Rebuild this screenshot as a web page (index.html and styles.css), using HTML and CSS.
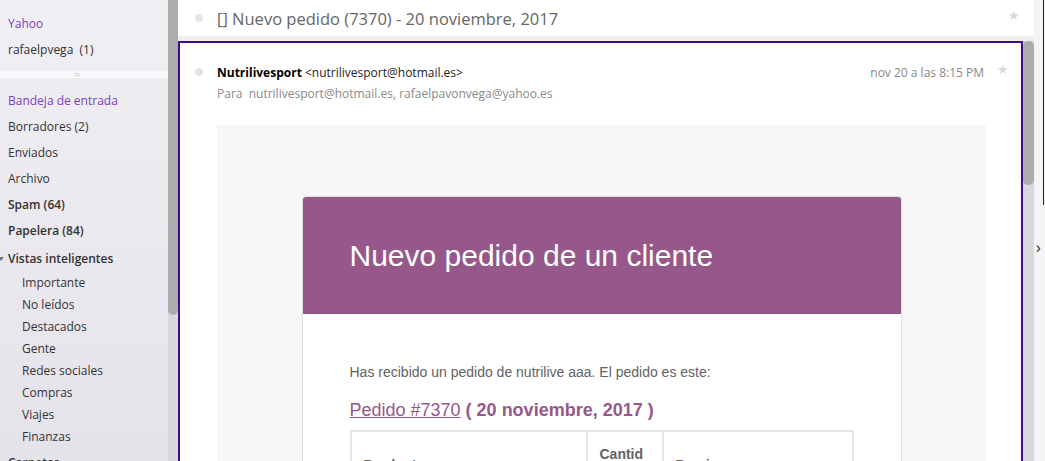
FILE: index.html
```html
<!DOCTYPE html>
<html>
<head>
    <meta name="viewport" content="width=device-width, initial-scale=1.0">
    <title>[] Nuevo pedido (7370) - 20 noviembre, 2017</title>
    <link rel="stylesheet" href="styles.css">
</head>
<body>
    <div class="app">
        <!-- Folder list -->
        <aside class="sidebar">
            <ul class="accounts">
                <li class="item active">Yahoo</li>
                <li class="item">rafaelpvega&nbsp; (1)</li>
            </ul>
            <div class="divider">=</div>
            <ul class="folders">
                <li class="item active">Bandeja de entrada</li>
                <li class="item">Borradores (2)</li>
                <li class="item">Enviados</li>
                <li class="item">Archivo</li>
                <li class="item strong">Spam (64)</li>
                <li class="item strong">Papelera (84)</li>
                <li class="group"><span class="caret"></span>Vistas inteligentes</li>
                <li class="sub">Importante</li>
                <li class="sub">No leídos</li>
                <li class="sub">Destacados</li>
                <li class="sub">Gente</li>
                <li class="sub">Redes sociales</li>
                <li class="sub">Compras</li>
                <li class="sub">Viajes</li>
                <li class="sub">Finanzas</li>
                <li class="group"><span class="caret"></span>Carpetas</li>
            </ul>
        </aside>
        <div class="scrollbar side-scroll"><div class="thumb"></div></div>

        <!-- Reading pane -->
        <main class="reader">
            <header class="subject-bar">
                <span class="dot"></span>
                <h1 class="subject">[] Nuevo pedido (7370) - 20 noviembre, 2017</h1>
                <span class="star">&#9733;</span>
            </header>

            <div class="reader-body">
                <article class="message">
                    <div class="msg-head">
                        <span class="dot"></span>
                        <div class="msg-meta">
                            <div class="from"><b>Nutrilivesport</b> &lt;nutrilivesport@hotmail.es&gt;</div>
                            <div class="to">Para&nbsp; nutrilivesport@hotmail.es, rafaelpavonvega@yahoo.es</div>
                        </div>
                        <span class="date">nov 20 a las 8:15 PM</span>
                        <span class="star">&#9733;</span>
                    </div>

                    <!-- Email content -->
                    <div class="mail-wrap">
                        <div class="mail-card">
                            <div class="mail-header">
                                <h2>Nuevo pedido de un cliente</h2>
                            </div>
                            <div class="mail-content">
                                <p>Has recibido un pedido de nutrilive aaa. El pedido es este:</p>
                                <h3><a href="#">Pedido #7370</a> ( 20 noviembre, 2017 )</h3>
                                <table class="order">
                                    <tr>
                                        <th class="col-product">Producto</th>
                                        <th class="col-qty">Cantidad</th>
                                        <th class="col-price">Precio</th>
                                    </tr>
                                </table>
                            </div>
                        </div>
                    </div>
                </article>
                <div class="scrollbar msg-scroll"><div class="thumb"></div></div>
            </div>
        </main>

        <div class="edge">
            <div class="edge-line"></div>
            <span class="chevron">&#8250;</span>
        </div>
    </div>
</body>
</html>
```

FILE: styles.css
```css
html, body {
    margin: 0;
    height: 100%;
    overflow: hidden;
}

body {
    font-family: "Open Sans", "Noto Sans", sans-serif;
    font-size: 12px;
    color: #333;
    background: #efeef2;
}

ul {
    list-style: none;
    margin: 0;
    padding: 0;
}

.app {
    display: flex;
    height: 461px;
}

/* Sidebar */
.sidebar {
    width: 168px;
    flex-shrink: 0;
    background: linear-gradient(#f0eff3, #e5e3ea);
    padding-top: 11px;
    box-sizing: border-box;
    overflow: hidden;
}

.item {
    line-height: 26px;
    padding-left: 8px;
    white-space: nowrap;
}

.item.active {
    color: #7d3ebf;
}

.item.strong,
.group {
    font-weight: 600;
}

.divider {
    margin: 8px 0 10px;
    height: 7px;
    line-height: 7px;
    background: #f8f7fa;
    color: #b9b9bd;
    font-size: 10px;
    text-align: center;
    padding-right: 14px;
}

.group {
    line-height: 26px;
    margin-top: 2px;
    padding-left: 8px;
    position: relative;
}

.caret {
    position: absolute;
    left: -2px;
    top: 11px;
    border-left: 3px solid transparent;
    border-right: 3px solid transparent;
    border-top: 4px solid #777;
}

.sub {
    line-height: 22px;
    padding-left: 22px;
}

/* Scrollbars */
.scrollbar {
    width: 10px;
    flex-shrink: 0;
    background: #d8d7dc;
}

.scrollbar .thumb {
    background: #adadad;
    border-radius: 0 0 5px 5px;
}

.side-scroll .thumb {
    height: 315px;
}

.msg-scroll {
    width: 11px;
}

.msg-scroll .thumb {
    height: 144px;
    border-radius: 5px;
}

/* Reading pane */
.reader {
    flex: 1;
    display: flex;
    flex-direction: column;
    min-width: 0;
}

.subject-bar {
    height: 36px;
    background: #fff;
    display: flex;
    align-items: center;
    padding: 0 14px 0 17px;
    margin-bottom: 5px;
    flex-shrink: 0;
}

.dot {
    width: 8px;
    height: 8px;
    border-radius: 50%;
    background: #e4e4e4;
    flex-shrink: 0;
}

.subject {
    flex: 1;
    margin: 0 0 0 14px;
    font-size: 16.5px;
    font-weight: 400;
    color: #666;
}

.star {
    color: #d9d9d9;
    font-size: 13px;
}

.subject-bar .star {
    margin-top: -6px;
}

.reader-body {
    flex: 1;
    display: flex;
    min-height: 0;
}

.message {
    flex: 1;
    border: 2px solid #3f0b8f;
    border-bottom: none;
    background: #fff;
    overflow: hidden;
}

.msg-head {
    display: flex;
    align-items: flex-start;
    padding: 19px 12px 0 15px;
}

.msg-head .dot {
    margin-top: 6px;
}

.msg-meta {
    flex: 1;
    margin-left: 14px;
    line-height: 21px;
}

.from {
    color: #222;
}

.from b {
    color: #000;
    font-weight: 700;
}

.to {
    color: #8a8a8a;
}

.date {
    color: #888;
    line-height: 21px;
}

.msg-head .star {
    margin: -2px 0 0 13px;
}

/* Email template */
.mail-wrap {
    background: #f7f7f7;
    margin: 21px 35px 0 37px;
    padding-top: 71px;
    height: 400px;
}

.mail-card {
    width: 600px;
    margin: 0 auto;
    background: #fff;
    border: 1px solid #dedede;
    border-radius: 3px;
    font-family: "Liberation Sans", Arial, sans-serif;
    box-sizing: border-box;
}

.mail-header {
    background: #96588a;
    border-radius: 3px 3px 0 0;
    padding: 36px 47px;
}

.mail-header h2 {
    margin: 0;
    color: #fff;
    font-size: 30px;
    font-weight: 300;
    line-height: 45px;
}

.mail-content {
    padding: 48px 47px;
    color: #636363;
    font-size: 14px;
}

.mail-content p {
    margin: 0 0 16px;
    line-height: 21px;
}

.mail-content h3 {
    margin: 0 0 8px;
    color: #96588a;
    font-size: 18px;
    line-height: 23px;
    font-weight: 700;
}

.mail-content h3 a {
    color: #96588a;
    font-weight: 400;
}

.order {
    width: 100%;
    border: 1px solid #e5e5e5;
    border-collapse: collapse;
}

.order th {
    border: 2px solid #e5e5e5;
    padding: 12px;
    text-align: left;
    font-size: 14px;
    line-height: 21px;
    color: #636363;
}

.col-product {
    width: 210px;
}

.col-qty {
    width: 50px;
    word-break: break-all;
}

/* Right edge strip */
.edge {
    width: 11px;
    flex-shrink: 0;
    background: #f4f4f6;
    position: relative;
}

.edge-line {
    position: absolute;
    right: 1px;
    top: 0;
    width: 1px;
    height: 205px;
    background: #222;
}

.chevron {
    position: absolute;
    left: 2px;
    top: 236px;
    font-size: 16px;
    color: #222;
}
```
